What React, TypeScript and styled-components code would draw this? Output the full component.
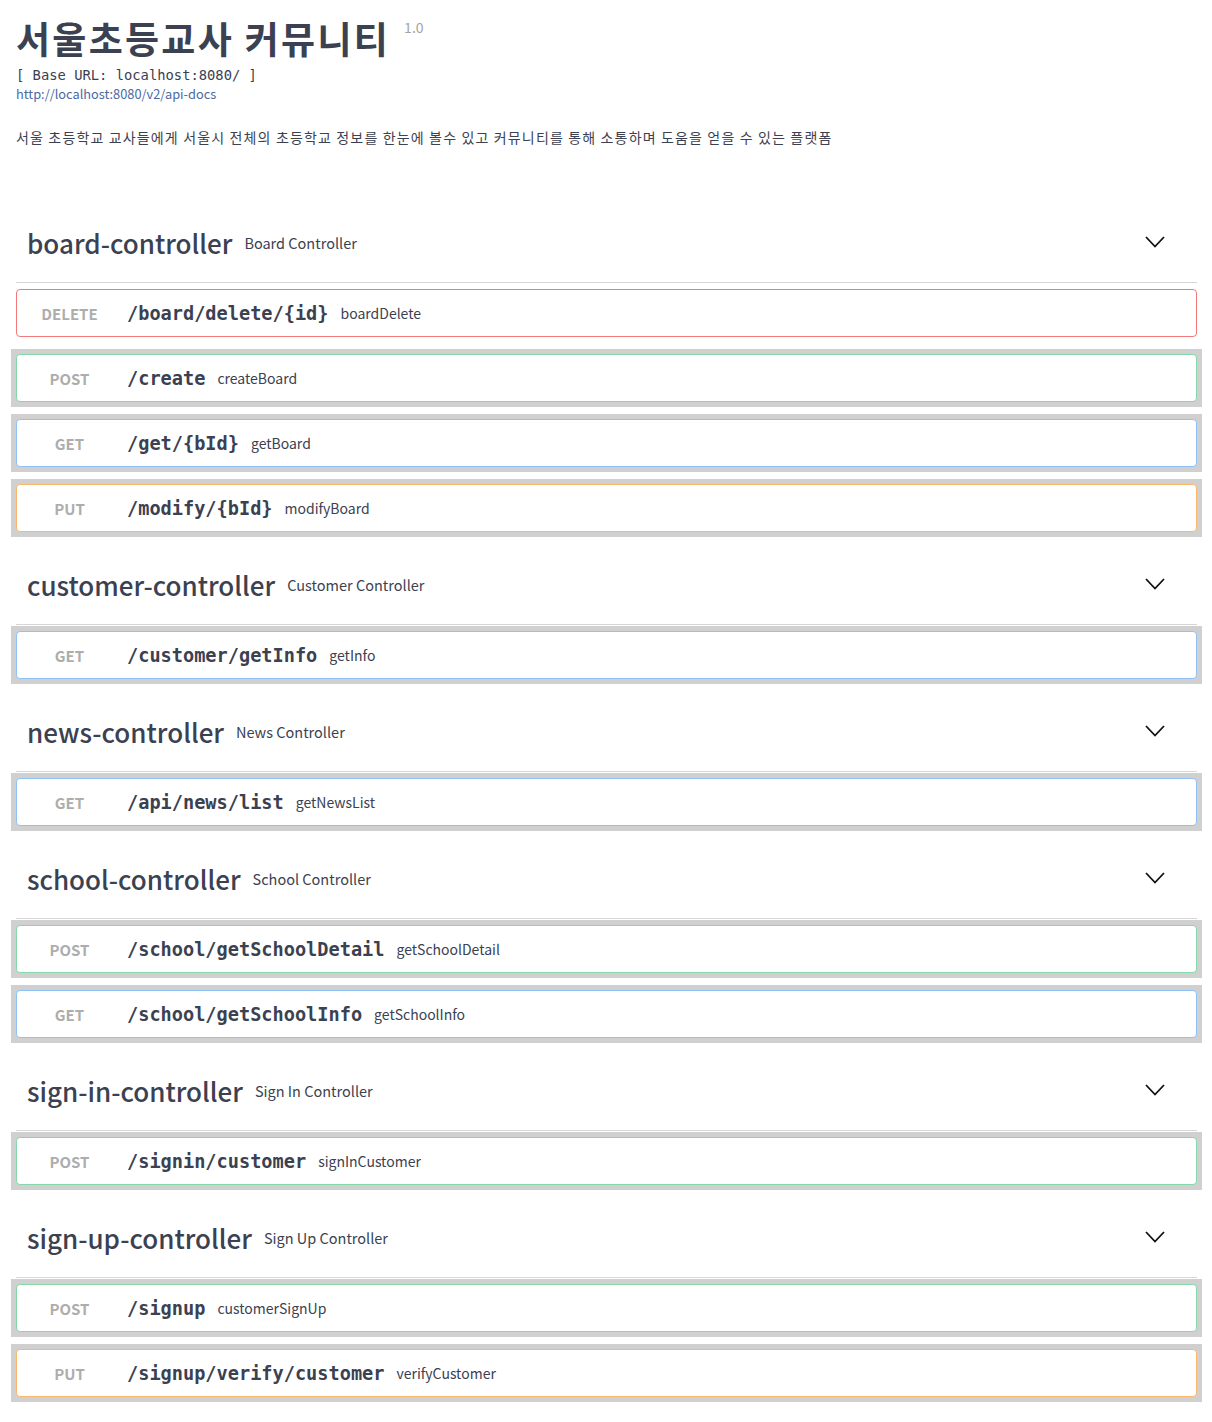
import React from 'react';
import styled, { createGlobalStyle } from 'styled-components';

const Global = createGlobalStyle`
  html, body { margin: 0; padding: 0; background: #fff; }
  body {
    font-family: "Noto Sans CJK KR", "Noto Sans", sans-serif;
    color: #3b4151;
  }
`;

type Method = 'DELETE' | 'POST' | 'GET' | 'PUT';

const borderColors: Record<Method, string> = {
  DELETE: '#f47a7a',
  POST: '#84d8aa',
  GET: '#8ec1f6',
  PUT: '#fbb76a',
};

const Page = styled.div`
  padding: 0 15px 20px 16px;
`;

const Info = styled.header`
  padding-top: 16px;
  margin-bottom: 58px;
`;

const Title = styled.h2`
  margin: 0;
  display: flex;
  align-items: flex-start;
  font-size: 37px;
  font-weight: 700;
  line-height: 44px;
  letter-spacing: 2.3px;
  color: #3b4151;
`;

const Version = styled.small`
  font-size: 14px;
  font-weight: 400;
  line-height: 18px;
  letter-spacing: 0;
  color: #a4a4a4;
  margin-left: 14px;
  margin-top: 2px;
`;

const BaseUrl = styled.pre`
  margin: 6px 0 0;
  font-family: "DejaVu Sans Mono", monospace;
  font-size: 13.8px;
  line-height: 18px;
  color: #3b4151;
`;

const DocsLink = styled.a`
  display: block;
  font-size: 12.8px;
  line-height: 19px;
  color: #4a6aa5;
  text-decoration: none;
`;

const Description = styled.p`
  margin: 24px 0 0;
  font-size: 14px;
  line-height: 20px;
  letter-spacing: 1.15px;
  color: #3b4151;
`;

const Section = styled.section`
  margin-bottom: 10px;
`;

const TagHeader = styled.div`
  display: flex;
  align-items: center;
  height: 78px;
  box-sizing: border-box;
  padding: 0 32px 3px 11px;
  border-bottom: 1px solid #d6d6d6;
  margin-bottom: 1px;
`;

const TagName = styled.span`
  font-size: 26px;
  font-weight: 500;
  color: #3b4151;
`;

const TagDesc = styled.span`
  margin-left: 12px;
  font-size: 14.5px;
  color: #3b4151;
  flex: 1;
`;

const Chevron = styled.svg`
  width: 20px;
  height: 12px;
  flex: none;
`;

const OpFrame = styled.div<{ $active: boolean }>`
  margin: 0 -5px 7px;
  padding: 5px;
  background: ${(p) => (p.$active ? '#d0d0d0' : 'transparent')};
`;

const OpRow = styled.div<{ $method: Method }>`
  display: flex;
  align-items: center;
  height: 48px;
  box-sizing: border-box;
  padding: 0 10px;
  background: #fff;
  border: 1px solid ${(p) => borderColors[p.$method]};
  border-radius: 4px;
`;

const MethodLabel = styled.span`
  width: 85px;
  flex: none;
  text-align: center;
  font-size: 15px;
  font-weight: 700;
  color: #adadad;
`;

const Path = styled.span`
  margin-left: 15px;
  font-family: "DejaVu Sans Mono", monospace;
  font-size: 18.6px;
  font-weight: 700;
  color: #3b4151;
`;

const Summary = styled.span`
  margin-left: 12px;
  font-size: 14px;
  color: #3b4151;
`;

type Op = { method: Method; path: string; summary: string; active: boolean };
type Tag = { name: string; desc: string; ops: Op[] };

const tags: Tag[] = [
  {
    name: 'board-controller',
    desc: 'Board Controller',
    ops: [
      { method: 'DELETE', path: '/board/delete/{id}', summary: 'boardDelete', active: false },
      { method: 'POST', path: '/create', summary: 'createBoard', active: true },
      { method: 'GET', path: '/get/{bId}', summary: 'getBoard', active: true },
      { method: 'PUT', path: '/modify/{bId}', summary: 'modifyBoard', active: true },
    ],
  },
  {
    name: 'customer-controller',
    desc: 'Customer Controller',
    ops: [{ method: 'GET', path: '/customer/getInfo', summary: 'getInfo', active: true }],
  },
  {
    name: 'news-controller',
    desc: 'News Controller',
    ops: [{ method: 'GET', path: '/api/news/list', summary: 'getNewsList', active: true }],
  },
  {
    name: 'school-controller',
    desc: 'School Controller',
    ops: [
      { method: 'POST', path: '/school/getSchoolDetail', summary: 'getSchoolDetail', active: true },
      { method: 'GET', path: '/school/getSchoolInfo', summary: 'getSchoolInfo', active: true },
    ],
  },
  {
    name: 'sign-in-controller',
    desc: 'Sign In Controller',
    ops: [{ method: 'POST', path: '/signin/customer', summary: 'signInCustomer', active: true }],
  },
  {
    name: 'sign-up-controller',
    desc: 'Sign Up Controller',
    ops: [
      { method: 'POST', path: '/signup', summary: 'customerSignUp', active: true },
      { method: 'PUT', path: '/signup/verify/customer', summary: 'verifyCustomer', active: true },
    ],
  },
];

export default function App() {
  return (
    <>
      <Global />
      <Page>
        <Info>
          <Title>
            서울초등교사 커뮤니티
            <Version>1.0</Version>
          </Title>
          <BaseUrl>[ Base URL: localhost:8080/ ]</BaseUrl>
          <DocsLink href="#">http://localhost:8080/v2/api-docs</DocsLink>
          <Description>
            서울 초등학교 교사들에게 서울시 전체의 초등학교 정보를 한눈에 볼수 있고 커뮤니티를 통해 소통하며 도움을 얻을 수 있는 플랫폼
          </Description>
        </Info>
        {tags.map((t) => (
          <Section key={t.name}>
            <TagHeader>
              <TagName>{t.name}</TagName>
              <TagDesc>{t.desc}</TagDesc>
              <Chevron viewBox="0 0 20 12">
                <polyline points="1,1 10,10.5 19,1" fill="none" stroke="#111" strokeWidth="1.8" />
              </Chevron>
            </TagHeader>
            {t.ops.map((o) => (
              <OpFrame key={o.method + o.path} $active={o.active}>
                <OpRow $method={o.method}>
                  <MethodLabel>{o.method}</MethodLabel>
                  <Path>{o.path}</Path>
                  <Summary>{o.summary}</Summary>
                </OpRow>
              </OpFrame>
            ))}
          </Section>
        ))}
      </Page>
    </>
  );
}
